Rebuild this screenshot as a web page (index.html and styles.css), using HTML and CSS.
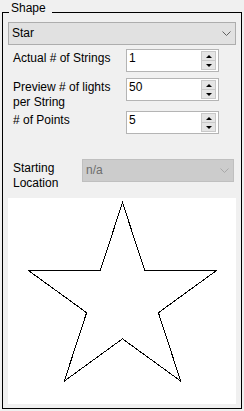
FILE: index.html
```html
<!DOCTYPE html>
<html lang="en">
<head>
    <meta charset="UTF-8">
    <title>Shape</title>
    <link rel="stylesheet" href="styles.css">
</head>
<body>
    <div class="group">
        <span class="legend">Shape</span>

        <div class="select">
            <span>Star</span>
            <svg class="chevron" width="9" height="5" viewBox="0 0 9 5"><polyline points="0.5,0.5 4.5,4.5 8.5,0.5" /></svg>
        </div>

        <div class="row row-first">
            <div class="label">Actual # of Strings</div>
            <div class="spin">
                <span class="value">1</span>
                <div class="spin-btns">
                    <div class="spin-btn"><span class="tri-up"></span></div>
                    <div class="spin-btn"><span class="tri-down"></span></div>
                </div>
            </div>
        </div>

        <div class="row row-second">
            <div class="label">Preview # of lights<br>per String</div>
            <div class="spin">
                <span class="value">50</span>
                <div class="spin-btns">
                    <div class="spin-btn"><span class="tri-up"></span></div>
                    <div class="spin-btn"><span class="tri-down"></span></div>
                </div>
            </div>
        </div>

        <div class="row row-third">
            <div class="label"># of Points</div>
            <div class="spin">
                <span class="value">5</span>
                <div class="spin-btns">
                    <div class="spin-btn"><span class="tri-up"></span></div>
                    <div class="spin-btn"><span class="tri-down"></span></div>
                </div>
            </div>
        </div>

        <div class="row row-start">
            <div class="label label-short">Starting<br>Location</div>
            <div class="select select-disabled">
                <span>n/a</span>
                <svg class="chevron" width="9" height="5" viewBox="0 0 9 5"><polyline points="0.5,0.5 4.5,4.5 8.5,0.5" /></svg>
            </div>
        </div>

        <div class="preview">
            <svg width="228" height="206" viewBox="0 0 228 206">
                <polygon class="star" points="114.5,4.5 136.7,72.4 208.7,72.4 150.4,114.7 172.7,183.1 114.5,140.8 56.3,183.1 78.6,114.7 20.3,72.4 92.3,72.4" />
            </svg>
        </div>
    </div>
</body>
</html>
```

FILE: styles.css
```css
body {
    margin: 0;
    padding: 12px 2px 2px 2px;
    background-color: #f0f0f0;
    font-family: "Liberation Sans", Arial, sans-serif;
    font-size: 12px;
    line-height: 15px;
    color: #000;
}
.group {
    position: relative;
    border: 1px solid #000;
    padding: 9px 5px 4px 5px;
}
.legend {
    position: absolute;
    top: -12px;
    left: 6px;
    padding: 0 6px 0 2px;
    background-color: #f0f0f0;
}
.select {
    display: flex;
    align-items: center;
    justify-content: space-between;
    height: 23px;
    box-sizing: border-box;
    border: 1px solid #adadad;
    background-color: #e1e1e1;
    padding: 0 4px 0 3px;
}
.select .chevron polyline {
    fill: none;
    stroke: #606060;
    stroke-width: 1;
}
.select-disabled {
    flex: 1;
    border-color: #bfbfbf;
    background-color: #cccccc;
    color: #6d6d6d;
    margin-right: 2px;
}
.select-disabled .chevron polyline {
    stroke: #a8a8a8;
}
.row {
    display: flex;
    align-items: flex-start;
}
.row-first {
    margin-top: 4px;
}
.row-second {
    margin-top: 6px;
}
.row-third {
    margin-top: 1px;
}
.row-start {
    margin-top: 25px;
}
.label {
    width: 118px;
    box-sizing: border-box;
    padding: 2px 0 0 5px;
}
.label-short {
    width: 74px;
}
.spin {
    display: flex;
    justify-content: space-between;
    width: 93px;
    height: 23px;
    box-sizing: border-box;
    border: 1px solid #b4b4b4;
    background-color: #fff;
    padding: 1px 2px 0 2px;
}
.spin-btns {
    display: flex;
    flex-direction: column;
    width: 15px;
}
.spin-btn {
    display: flex;
    align-items: center;
    justify-content: center;
    height: 8px;
    border: 1px solid #c8c8c8;
    background-color: #e5e5e5;
}
.spin-btn + .spin-btn {
    border-top: none;
}
.tri-up {
    width: 0;
    height: 0;
    border-left: 3px solid transparent;
    border-right: 3px solid transparent;
    border-bottom: 3px solid #000;
}
.tri-down {
    width: 0;
    height: 0;
    border-left: 3px solid transparent;
    border-right: 3px solid transparent;
    border-top: 3px solid #000;
}
.preview {
    margin-top: 7px;
    height: 206px;
    background-color: #fff;
}
.preview svg {
    display: block;
}
.star {
    fill: none;
    stroke: #000;
    stroke-width: 1;
    shape-rendering: crispEdges;
}
```
